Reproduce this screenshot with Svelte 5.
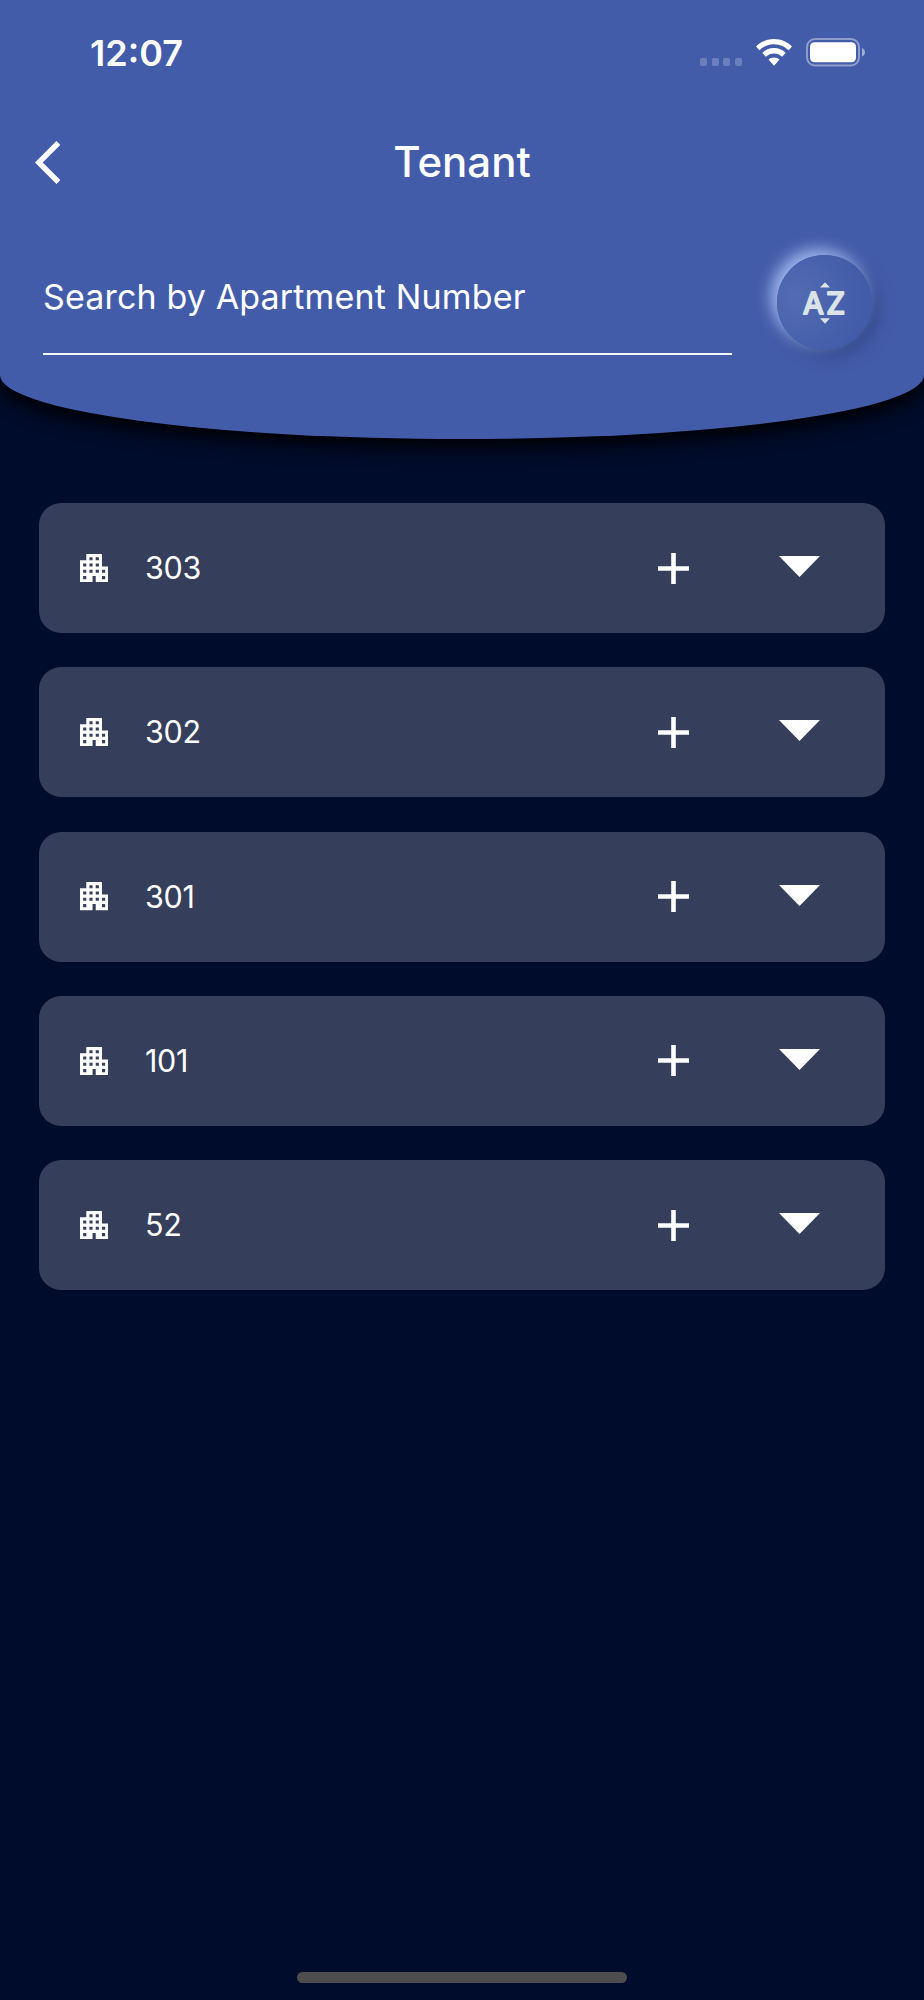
<script>
  let search = "";
  let ascending = false;

  const apartments = ["303", "302", "301", "101", "52"];

  $: visible = apartments.filter((number) => number.includes(search.trim()));
  $: sorted = ascending ? [...visible].reverse() : visible;
</script>

<div class="screen">
  <header>
    <div class="status">
      <span class="time">12:07</span>
      <div class="indicators">
        <div class="dots">
          <i></i><i></i><i></i><i></i>
        </div>
        <svg class="wifi" viewBox="0 0 36 27" width="36" height="27">
          <path d="M18 0C11 0 4.800 2.700 0 7.400L3.400 11.200C7.300 7.400 12.300 5.200 18 5.200S28.700 7.400 32.600 11.200L36 7.400C31.200 2.700 25 0 18 0Z" />
          <path d="M18 9.100C13.500 9.100 9.400 10.900 6.300 13.900L9.900 17.700C12.100 15.600 14.900 14.400 18 14.400S23.900 15.600 26.100 17.700L29.700 13.900C26.600 10.900 22.500 9.100 18 9.100Z" />
          <path d="M18 18.400C15.900 18.400 14 19.200 12.500 20.600L18 26.800L23.500 20.600C22 19.200 20.100 18.400 18 18.400Z" />
        </svg>
        <svg class="battery" viewBox="0 0 60 29" width="60" height="29">
          <rect x="1" y="1" width="52" height="26.500" rx="8" fill="none" stroke="#fff" stroke-opacity="0.4" stroke-width="2" />
          <rect x="4" y="4.300" width="46" height="20" rx="4.500" />
          <path d="M56 10C60 11.500 60 17 56 18.500Z" opacity="0.5" />
        </svg>
      </div>
    </div>

    <nav>
      <button class="back" aria-label="Back">
        <svg viewBox="0 2.1 11.67 19.8" width="25.300" height="43">
          <path d="M11.67 3.87L9.9 2.1 0 12l9.9 9.900 1.770-1.770L3.540 12z" />
        </svg>
      </button>
      <h1>Tenant</h1>
    </nav>

    <div class="tools">
      <input placeholder="Search by Apartment Number" bind:value={search} />
      <button
        class="sort"
        aria-label="Sort"
        on:click={() => (ascending = !ascending)}
      >
        <svg viewBox="0 0 48 48" width="48" height="48">
          <path d="M19 8.500L24 3.200l5 5.300zM19 39.300h10L24 44.800z" />
          <text x="1.900" y="35">A</text>
          <text x="25.200" y="35">Z</text>
        </svg>
      </button>
    </div>
  </header>

  <main>
    {#each sorted as number}
      <div class="card">
        <svg class="building" viewBox="3 3 18 18" width="28.300" height="28.300">
          <path d="M17 11V3H7v4H3v14h8v-4h2v4h8V11h-4zM7 19H5v-2h2v2zm0-4H5v-2h2v2zm0-4H5V9h2v2zm4 4H9v-2h2v2zm0-4H9V9h2v2zm0-4H9V5h2v2zm4 8h-2v-2h2v2zm0-4h-2V9h2v2zm0-4h-2V5h2v2zm4 12h-2v-2h2v2zm0-4h-2v-2h2v2z" />
        </svg>
        <span class="number">{number}</span>
        <button class="add" aria-label="Add tenant">
          <svg viewBox="0 0 31 31" width="31" height="31">
            <path d="M13.200 0h4.600v13.200H31v4.600H17.800V31h-4.600V17.800H0v-4.600h13.200z" />
          </svg>
        </button>
        <button class="expand" aria-label="Expand">
          <svg viewBox="0 0 41 21" width="41" height="21">
            <path d="M0 0h41L20.500 21z" />
          </svg>
        </button>
      </div>
    {/each}
  </main>

  <div class="home"></div>
</div>

<style>
  :global(body) {
    margin: 0;
    background: #000c2b;
  }
  .screen {
    display: flex;
    flex-direction: column;
    width: 924px;
    height: 2000px;
    overflow: hidden;
    background: #000c2b;
    color: #fff;
    font-family: Inter, "Liberation Sans", sans-serif;
  }
  svg {
    display: block;
    fill: #fff;
  }
  button {
    display: block;
    padding: 0;
    border: none;
    background: none;
    color: inherit;
  }
  header {
    box-sizing: border-box;
    flex: none;
    height: 438.500px;
    background: #435ca9;
    border-radius: 0 0 50% 50% / 0 0 64px 64px;
    box-shadow: 0 8px 20px #000;
  }
  .status {
    display: flex;
    justify-content: space-between;
    box-sizing: border-box;
    height: 105px;
    padding: 31px 58px 0 90px;
  }
  .time {
    font-size: 36px;
    font-weight: 600;
    line-height: 44px;
  }
  .indicators {
    display: flex;
    align-items: flex-start;
    padding-top: 7px;
  }
  .dots {
    display: flex;
    gap: 4.700px;
    margin: 20px 14px 0 0;
  }
  .dots i {
    width: 7px;
    height: 8px;
    border-radius: 2px;
    background: rgba(255, 255, 255, 0.22);
  }
  .wifi {
    margin: 1px 14px 0 0;
  }
  nav {
    display: grid;
    grid-template-columns: 100px 1fr 100px;
    align-items: center;
    height: 114px;
  }
  .back {
    margin-left: 34.500px;
  }
  h1 {
    margin: 0;
    padding-bottom: 1px;
    font-size: 42px;
    font-weight: 550;
    text-align: center;
  }
  .tools {
    display: flex;
    justify-content: space-between;
    padding: 36px 52px 0 43px;
  }
  input {
    box-sizing: border-box;
    width: 689px;
    height: 100px;
    padding: 0 0 15px;
    border: none;
    border-bottom: 2px solid #f4f5fa;
    border-radius: 0;
    outline: none;
    background: none;
    color: #fff;
    font: 400 34px Inter, "Liberation Sans", sans-serif;
    letter-spacing: 0.150px;
  }
  input::placeholder {
    color: #fff;
    opacity: 1;
  }
  .sort {
    display: flex;
    align-items: center;
    justify-content: center;
    width: 95px;
    height: 95px;
    border-radius: 50%;
    background: radial-gradient(circle at 20% 45%, #526bb2, #435ca9 75%);
    box-shadow:
      -6px -6px 15px rgba(185, 205, 255, 0.8),
      6px 6px 15px rgba(45, 62, 120, 0.65);
  }
  .sort svg,
  .sort text {
    fill: #dbe3e7;
  }
  .sort text {
    font: 400 30px Inter, "Liberation Sans", sans-serif;
    stroke: #dbe3e7;
    stroke-width: 2px;
    stroke-linejoin: round;
  }
  main {
    display: flex;
    flex: 1;
    flex-direction: column;
    gap: 34.300px;
    padding: 64.500px 39px 0;
  }
  .card {
    display: grid;
    grid-template-columns: 65px 1fr 31px 41px;
    align-items: center;
    box-sizing: border-box;
    height: 130px;
    padding: 0 65px 0 41px;
    border-radius: 22px;
    background: #353e5a;
  }
  .number {
    font-size: 30.500px;
    line-height: 40px;
    letter-spacing: -0.300px;
  }
  .add {
    margin-left: -90px;
  }
  .expand {
    margin-top: -3px;
  }
  .home {
    flex: none;
    align-self: center;
    width: 330px;
    height: 11px;
    margin-bottom: 17px;
    border-radius: 6px;
    background: #4d4d4d;
  }
</style>
